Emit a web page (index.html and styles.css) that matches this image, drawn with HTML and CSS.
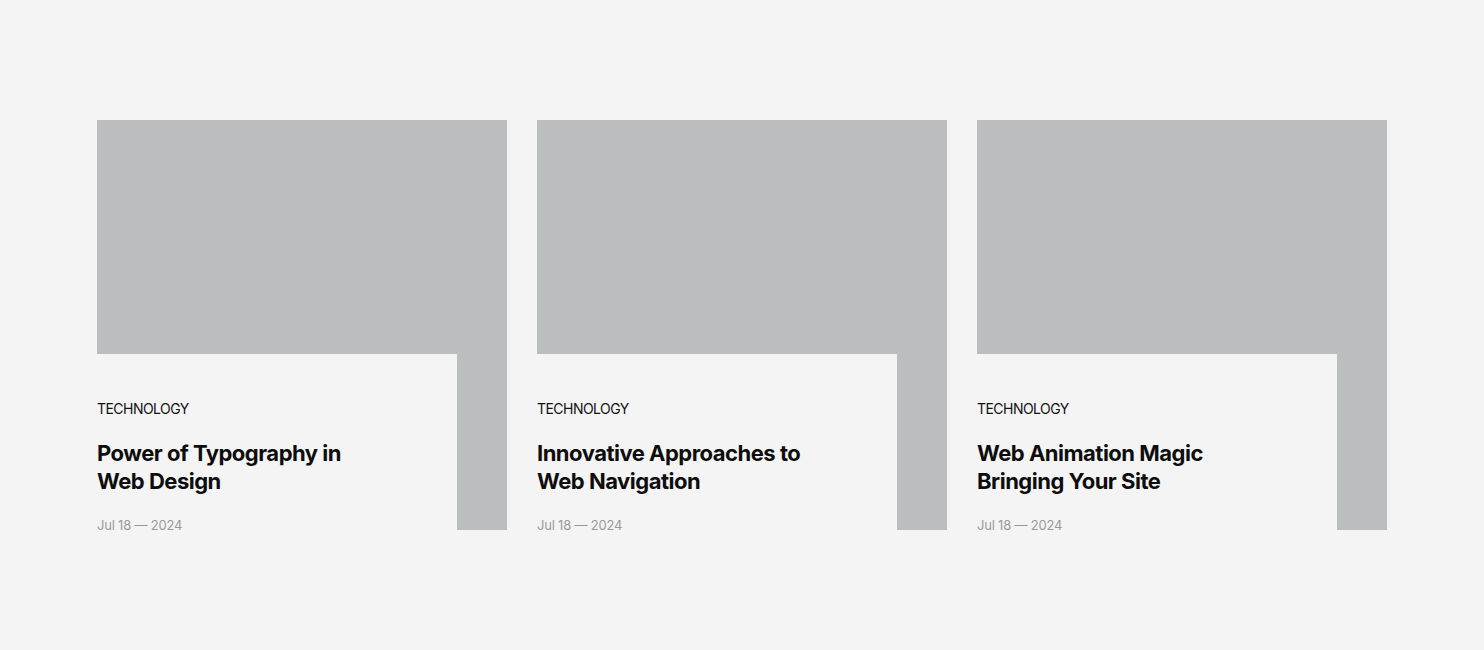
FILE: index.html
```html
<!DOCTYPE html>
<html lang="en">
<head>
    <meta charset="UTF-8">
    <meta name="viewport" content="width=device-width, initial-scale=1.0">
    <title>Blog</title>
    <link rel="stylesheet" href="styles.css">
</head>
<body>
    <div class="posts">
        <div class="card">
            <div class="card-img"></div>
            <div class="card-body">
                <div class="category">TECHNOLOGY</div>
                <h3 class="title">Power of Typography in<br>Web Design</h3>
                <div class="date">Jul 18 — 2024</div>
            </div>
        </div>
        <div class="card">
            <div class="card-img"></div>
            <div class="card-body">
                <div class="category">TECHNOLOGY</div>
                <h3 class="title">Innovative Approaches to<br>Web Navigation</h3>
                <div class="date">Jul 18 — 2024</div>
            </div>
        </div>
        <div class="card">
            <div class="card-img"></div>
            <div class="card-body">
                <div class="category">TECHNOLOGY</div>
                <h3 class="title">Web Animation Magic<br>Bringing Your Site</h3>
                <div class="date">Jul 18 — 2024</div>
            </div>
        </div>
    </div>
</body>
</html>
```
FILE: styles.css
```css
body {
    font-family: Inter, "Liberation Sans", sans-serif;
    background-color: #f4f4f4;
    margin: 0;
    padding: 0;
}
.posts {
    display: flex;
    justify-content: center;
    gap: 30px;
    padding-top: 120px;
}
.card {
    width: 410px;
    height: 410px;
    background: #bcbdbf;
}
.card-img {
    height: 234px;
}
.card-body {
    width: 360px;
    background: #f4f4f4;
    padding-top: 45px;
}
.category {
    font-size: 14px;
    line-height: 20px;
    color: #111;
    letter-spacing: -0.55px;
}
.title {
    margin: 20px 0 20px;
    font-size: 22px;
    line-height: 28px;
    font-weight: 700;
    color: #0d0d0d;
    letter-spacing: -0.5px;
}
.date {
    font-size: 13px;
    line-height: 20px;
    color: #9a9a9a;
    letter-spacing: -0.2px;
}
```
